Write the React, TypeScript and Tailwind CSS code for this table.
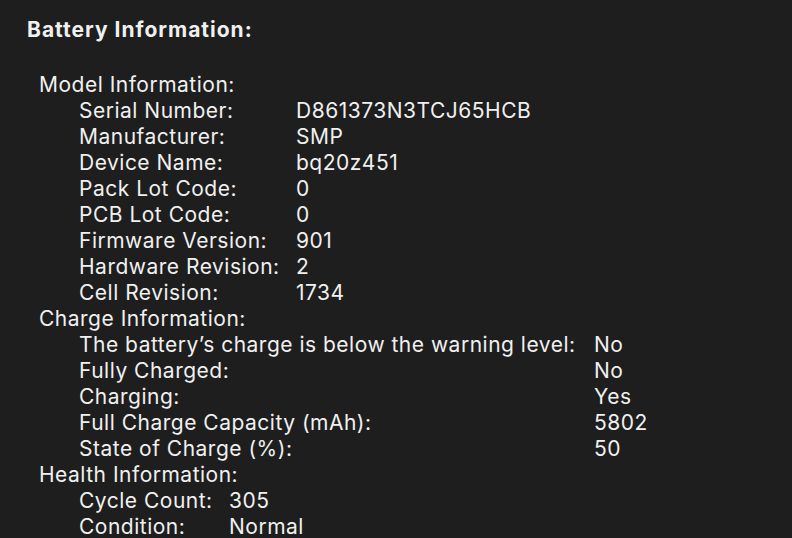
const model: [string, string][] = [
  ["Serial Number:", "D861373N3TCJ65HCB"],
  ["Manufacturer:", "SMP"],
  ["Device Name:", "bq20z451"],
  ["Pack Lot Code:", "0"],
  ["PCB Lot Code:", "0"],
  ["Firmware Version:", "901"],
  ["Hardware Revision:", "2"],
  ["Cell Revision:", "1734"],
];

const charge: [string, string][] = [
  ["The battery\u2019s charge is below the warning level:", "No"],
  ["Fully Charged:", "No"],
  ["Charging:", "Yes"],
  ["Full Charge Capacity (mAh):", "5802"],
  ["State of Charge (%):", "50"],
];

const health: [string, string][] = [
  ["Cycle Count:", "305"],
  ["Condition:", "Normal"],
];

function Section({ title, rows, cols }: { title: string; rows: [string, string][]; cols: string }) {
  return (
    <div className="pl-3">
      <div>{title}</div>
      <div className={`grid pl-10 ${cols}`}>
        {rows.map(([k, v]) => (
          <div key={k} className="contents">
            <span className="whitespace-nowrap">{k}</span>
            <span className="whitespace-nowrap">{v}</span>
          </div>
        ))}
      </div>
    </div>
  );
}

export default function App() {
  return (
    <div
      className="w-[792px] h-[538px] overflow-hidden bg-[#1e1e1e] text-[#f0f0f0] text-[21px] leading-[26px] tracking-[0.5px] pl-[27px] pt-[17px]"
      style={{ fontFamily: "Inter, 'Noto Sans', sans-serif" }}
    >
      <div className="font-bold tracking-[1px] mb-[29px]">Battery Information:</div>
      <Section title="Model Information:" rows={model} cols="grid-cols-[217px_1fr]" />
      <Section title="Charge Information:" rows={charge} cols="grid-cols-[515px_1fr]" />
      <Section title="Health Information:" rows={health} cols="grid-cols-[150px_1fr]" />
    </div>
  );
}
